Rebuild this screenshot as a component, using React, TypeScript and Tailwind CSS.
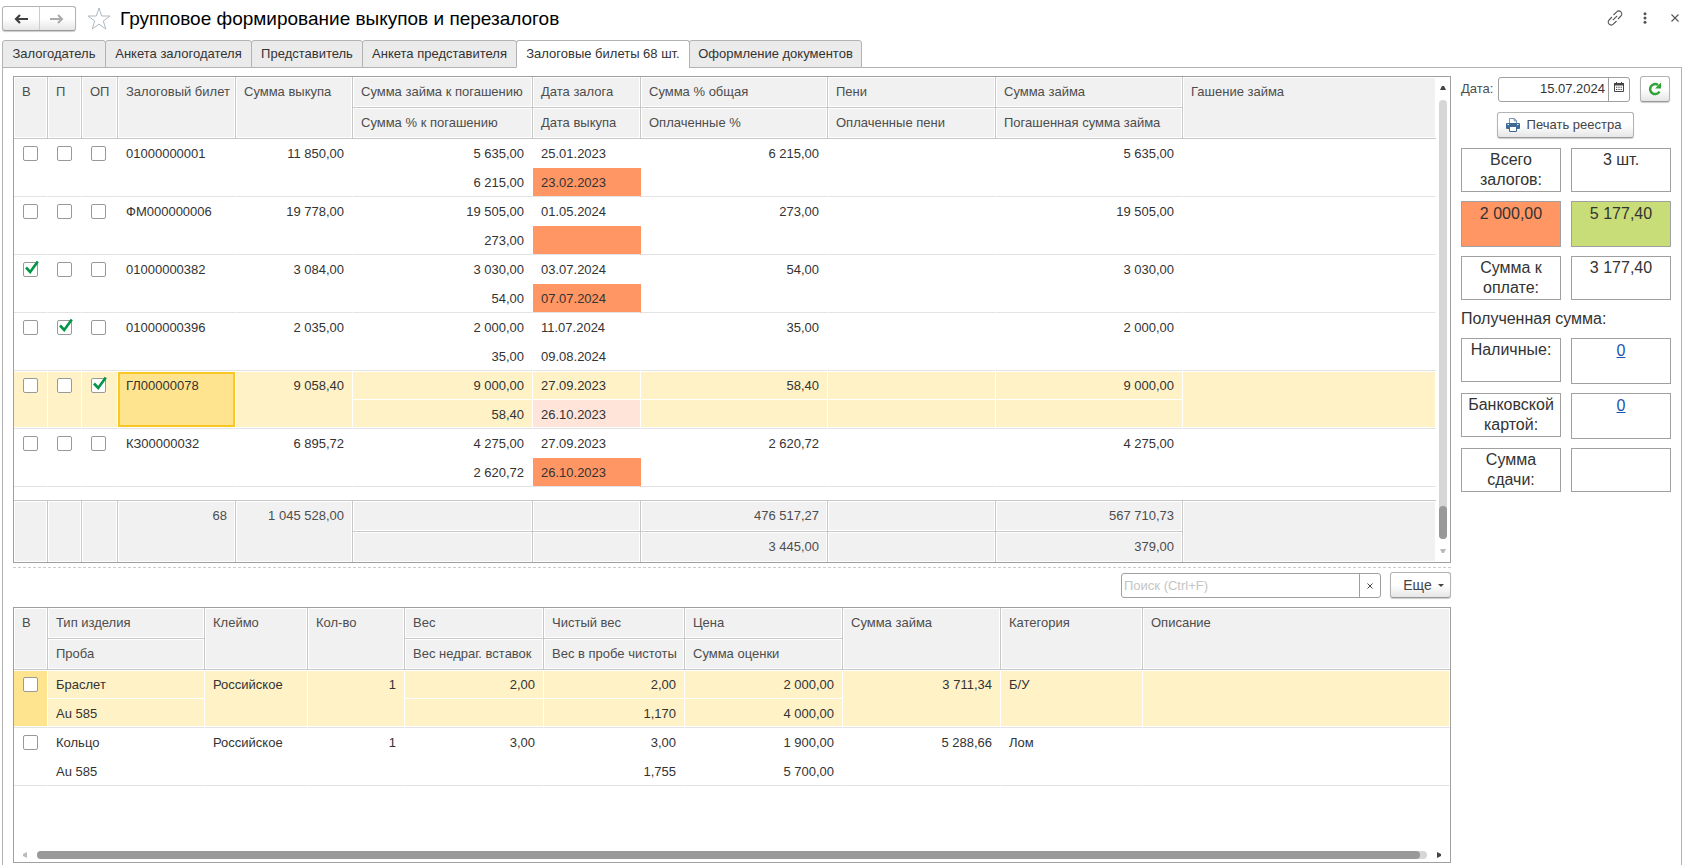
import { clsx } from "clsx";

type TColumn = {
  top: string;
  bottom?: string;
  width: string;
  align?: "right";
  check?: boolean;
};

type TCell = {
  top?: string;
  bottom?: string;
  checked?: boolean;
  mark?: "overdue" | "soft" | "current" | "focus";
};

type TRow = {
  id: string;
  selected?: boolean;
  cells: TCell[];
};

const tabs = [
  { title: "Залогодатель", width: "w-[104px]" },
  { title: "Анкета залогодателя", width: "w-[147px]" },
  { title: "Представитель", width: "w-[112px]" },
  { title: "Анкета представителя", width: "w-[155px]" },
  { title: "Залоговые билеты 68 шт.", width: "w-[174px]", active: true },
  { title: "Оформление документов", width: "w-[173px]" },
];

const ticketColumns: TColumn[] = [
  { top: "В", width: "w-[34px]", check: true },
  { top: "П", width: "w-[34px]", check: true },
  { top: "ОП", width: "w-[36px]", check: true },
  { top: "Залоговый билет", width: "w-[118px]" },
  { top: "Сумма выкупа", width: "w-[117px]", align: "right" },
  {
    top: "Сумма займа к погашению",
    bottom: "Сумма % к погашению",
    width: "w-[180px]",
    align: "right",
  },
  { top: "Дата залога", bottom: "Дата выкупа", width: "w-[108px]" },
  {
    top: "Сумма % общая",
    bottom: "Оплаченные %",
    width: "w-[187px]",
    align: "right",
  },
  {
    top: "Пени",
    bottom: "Оплаченные пени",
    width: "w-[168px]",
    align: "right",
  },
  {
    top: "Сумма займа",
    bottom: "Погашенная сумма займа",
    width: "w-[187px]",
    align: "right",
  },
  { top: "Гашение займа", width: "w-auto" },
];

const ticketRows: TRow[] = [
  {
    id: "01000000001",
    cells: [
      {},
      {},
      {},
      { top: "01000000001" },
      { top: "11 850,00" },
      { top: "5 635,00", bottom: "6 215,00" },
      { top: "25.01.2023", bottom: "23.02.2023", mark: "overdue" },
      { top: "6 215,00" },
      {},
      { top: "5 635,00" },
      {},
    ],
  },
  {
    id: "ФМ000000006",
    cells: [
      {},
      {},
      {},
      { top: "ФМ000000006" },
      { top: "19 778,00" },
      { top: "19 505,00", bottom: "273,00" },
      { top: "01.05.2024", mark: "overdue" },
      { top: "273,00" },
      {},
      { top: "19 505,00" },
      {},
    ],
  },
  {
    id: "01000000382",
    cells: [
      { checked: true },
      {},
      {},
      { top: "01000000382" },
      { top: "3 084,00" },
      { top: "3 030,00", bottom: "54,00" },
      { top: "03.07.2024", bottom: "07.07.2024", mark: "overdue" },
      { top: "54,00" },
      {},
      { top: "3 030,00" },
      {},
    ],
  },
  {
    id: "01000000396",
    cells: [
      {},
      { checked: true },
      {},
      { top: "01000000396" },
      { top: "2 035,00" },
      { top: "2 000,00", bottom: "35,00" },
      { top: "11.07.2024", bottom: "09.08.2024" },
      { top: "35,00" },
      {},
      { top: "2 000,00" },
      {},
    ],
  },
  {
    id: "ГЛ00000078",
    selected: true,
    cells: [
      {},
      {},
      { checked: true },
      { top: "ГЛ00000078", mark: "focus" },
      { top: "9 058,40" },
      { top: "9 000,00", bottom: "58,40" },
      { top: "27.09.2023", bottom: "26.10.2023", mark: "soft" },
      { top: "58,40" },
      {},
      { top: "9 000,00" },
      {},
    ],
  },
  {
    id: "КЗ00000032",
    cells: [
      {},
      {},
      {},
      { top: "КЗ00000032" },
      { top: "6 895,72" },
      { top: "4 275,00", bottom: "2 620,72" },
      { top: "27.09.2023", bottom: "26.10.2023", mark: "overdue" },
      { top: "2 620,72" },
      {},
      { top: "4 275,00" },
      {},
    ],
  },
];

const ticketTotals: TCell[] = [
  {},
  {},
  {},
  { top: "68" },
  { top: "1 045 528,00" },
  {},
  {},
  { top: "476 517,27", bottom: "3 445,00" },
  {},
  { top: "567 710,73", bottom: "379,00" },
  {},
];

const itemColumns: TColumn[] = [
  { top: "В", width: "w-[34px]", check: true },
  { top: "Тип изделия", bottom: "Проба", width: "w-[157px]" },
  { top: "Клеймо", width: "w-[103px]" },
  { top: "Кол-во", width: "w-[97px]", align: "right" },
  {
    top: "Вес",
    bottom: "Вес недраг. вставок",
    width: "w-[139px]",
    align: "right",
  },
  {
    top: "Чистый вес",
    bottom: "Вес в пробе чистоты",
    width: "w-[141px]",
    align: "right",
  },
  {
    top: "Цена",
    bottom: "Сумма оценки",
    width: "w-[158px]",
    align: "right",
  },
  { top: "Сумма займа", width: "w-[158px]", align: "right" },
  { top: "Категория", width: "w-[142px]" },
  { top: "Описание", width: "w-auto" },
];

const itemRows: TRow[] = [
  {
    id: "Браслет",
    selected: true,
    cells: [
      { mark: "current" },
      { top: "Браслет", bottom: "Au 585" },
      { top: "Российское" },
      { top: "1" },
      { top: "2,00" },
      { top: "2,00", bottom: "1,170" },
      { top: "2 000,00", bottom: "4 000,00" },
      { top: "3 711,34" },
      { top: "Б/У" },
      {},
    ],
  },
  {
    id: "Кольцо",
    cells: [
      {},
      { top: "Кольцо", bottom: "Au 585" },
      { top: "Российское" },
      { top: "1" },
      { top: "3,00" },
      { top: "3,00", bottom: "1,755" },
      { top: "1 900,00", bottom: "5 700,00" },
      { top: "5 288,66" },
      { top: "Лом" },
      {},
    ],
  },
];

const buttonStyle =
  "flex items-center justify-center rounded-[3px] border border-[#b3b3b3] border-b-[#999] bg-linear-to-b from-white from-50% to-[#e6e6e6] text-[#444] shadow-[0_1px_1px_#ccc]";

const Check = ({ label, checked }: { label: string; checked?: boolean }) => (
  <span className="relative mt-1.5 ml-px block size-[15px]">
    <input
      type="checkbox"
      aria-label={label}
      defaultChecked={checked}
      className="peer block size-[15px] appearance-none rounded-[2px] border border-[#999] bg-white"
    />
    <svg
      viewBox="0 0 16 16"
      className="pointer-events-none absolute -top-0.5 left-0 hidden size-4 peer-checked:block"
    >
      <path
        d="M3 7.5L7.2 12 14.8 1.5"
        fill="none"
        stroke="#009646"
        strokeWidth="2.6"
      />
    </svg>
  </span>
);

const headCell =
  "border-r border-b border-[#c8c8c8] bg-[#f1f1f1] px-2 text-left align-top font-normal whitespace-nowrap shadow-[inset_0_0_0_1px_#fff]";

const HeadRows = ({ columns }: { columns: TColumn[] }) => (
  <thead className="leading-[30px] text-[#4d4d4d]">
    <tr className="h-[31px]">
      {columns.map((column) => (
        <th
          key={column.top}
          rowSpan={column.bottom ? 1 : 2}
          className={clsx(headCell, "last:border-r-0")}
        >
          {column.top}
        </th>
      ))}
    </tr>
    <tr className="h-[31px]">
      {columns
        .filter((column) => column.bottom)
        .map((column) => (
          <th key={column.bottom} className={headCell}>
            {column.bottom}
          </th>
        ))}
    </tr>
  </thead>
);

const BodyRow = ({ row, columns }: { row: TRow; columns: TColumn[] }) => (
  <>
    <tr className="h-[29px]">
      {columns.map((column, index) => {
        const cell = row.cells[index];
        const tall = !column.bottom;
        return (
          <td
            key={column.top}
            rowSpan={tall ? 2 : 1}
            className={clsx(
              "border-r border-b px-2 pt-px align-top",
              column.align === "right" && "text-right",
              tall ? "border-b-[#e3e3e3]" : "border-b-white",
              row.selected ? "border-r-white" : "border-r-transparent",
              row.selected &&
                (!cell.mark || cell.mark === "soft") &&
                "bg-[#fff2c7]",
              cell.mark === "current" && "bg-[#ffe48f]",
              row.selected &&
                cell.mark !== "focus" &&
                (tall
                  ? "shadow-[inset_0_1px_0_#fff,inset_0_-1px_0_#fff]"
                  : "shadow-[inset_0_1px_0_#fff]"),
              cell.mark === "focus" &&
                "bg-[#ffe48f] shadow-[inset_0_1px_0_#fff,inset_0_-1px_0_#fff,inset_0_3px_0_#fac825,inset_0_-3px_0_#fac825,inset_2px_0_0_#fac825,inset_-2px_0_0_#fac825]"
            )}
          >
            {column.check ? (
              <Check
                label={`${column.top} ${row.id}`}
                checked={cell.checked}
              />
            ) : (
              cell.top
            )}
          </td>
        );
      })}
    </tr>
    <tr className="h-[29px]">
      {columns.map((column, index) => {
        const cell = row.cells[index];
        if (!column.bottom) return null;
        return (
          <td
            key={column.bottom}
            className={clsx(
              "border-r border-b border-b-[#e3e3e3] px-2 pt-px align-top",
              column.align === "right" && "text-right",
              row.selected
                ? "border-r-white shadow-[inset_0_-1px_0_#fff]"
                : "border-r-transparent",
              cell.mark === "overdue" && "bg-[#ff9664]",
              cell.mark === "soft" && "bg-[#ffe4da]",
              row.selected && cell.mark !== "soft" && "bg-[#fff2c7]"
            )}
          >
            {cell.bottom}
          </td>
        );
      })}
    </tr>
  </>
);

const TotalRows = ({
  totals,
  columns,
}: {
  totals: TCell[];
  columns: TColumn[];
}) => (
  <tfoot className="leading-[30px] text-[#4d4d4d]">
    <tr className="h-[14px]">
      <td
        colSpan={columns.length}
        className="border-b border-[#c8c8c8] leading-3"
      />
    </tr>
    <tr className="h-[31px]">
      {columns.map((column, index) => (
        <td
          key={column.top}
          rowSpan={column.bottom ? 1 : 2}
          className={clsx(
            "border-r border-[#c8c8c8] bg-[#f1f1f1] px-2 text-right align-top shadow-[inset_0_0_0_1px_#fff] last:border-r-0",
            column.bottom && "border-b"
          )}
        >
          {totals[index].top}
        </td>
      ))}
    </tr>
    <tr className="h-[30px]">
      {columns.map(
        (column, index) =>
          column.bottom && (
            <td
              key={column.bottom}
              className="border-r border-[#c8c8c8] bg-[#f1f1f1] px-2 text-right align-top shadow-[inset_0_0_0_1px_#fff]"
            >
              {totals[index].bottom}
            </td>
          )
      )}
    </tr>
  </tfoot>
);

const DataTable = ({
  columns,
  rows,
  totals,
}: {
  columns: TColumn[];
  rows: TRow[];
  totals?: TCell[];
}) => (
  <table className="w-full table-fixed border-separate border-spacing-0 leading-[27px]">
    <colgroup>
      {columns.map((column) => (
        <col key={column.top} className={column.width} />
      ))}
    </colgroup>
    <HeadRows columns={columns} />
    <tbody>
      {rows.map((row) => (
        <BodyRow key={row.id} row={row} columns={columns} />
      ))}
    </tbody>
    {totals && <TotalRows totals={totals} columns={columns} />}
  </table>
);

const VerticalScroll = () => (
  <div className="flex w-3.5 shrink-0 flex-col items-center py-[9px]">
    <svg viewBox="0 0 6 4" className="h-1 w-1.5">
      <path d="M0 4L2 0h2l2 4z" fill="#444" />
    </svg>
    <div className="mt-2.5 flex w-2 flex-1 flex-col justify-end rounded-full bg-[#d6d6d6]">
      <div className="h-[33px] rounded-full bg-[#999]" />
    </div>
    <svg viewBox="0 0 6 4" className="mt-2.5 h-1 w-1.5">
      <path d="M0 0L2 4h2l2-4z" fill="#bbb" />
    </svg>
  </div>
);

const HorizontalScroll = () => (
  <div className="mt-auto flex items-center px-[9px] pb-[3px]">
    <svg viewBox="0 0 4 6" className="h-1.5 w-1">
      <path d="M4 0L0 2v2l4 2z" fill="#bbb" />
    </svg>
    <div className="mx-2.5 h-2 flex-1 rounded-full bg-[#d6d6d6] pr-[7px]">
      <div className="h-2 rounded-full bg-[#999]" />
    </div>
    <svg viewBox="0 0 4 6" className="h-1.5 w-1">
      <path d="M0 0l4 2v2L0 6z" fill="#444" />
    </svg>
  </div>
);

const TitleBar = () => (
  <header className="flex h-10 items-start pt-1.5 pr-[21px] pl-0.5">
    <div className="flex h-[25px] w-[74px] rounded-[3px] border border-[#b3b3b3] border-b-[#999] bg-linear-to-b from-white from-50% to-[#e6e6e6] shadow-[0_1px_1px_#ccc]">
      <button
        aria-label="Назад"
        className="flex flex-1 items-center justify-center border-r border-[#ccc]"
      >
        <svg viewBox="0 0 14 10" className="h-2.5 w-3.5">
          <path
            d="M14 5H3M6 1L2 5l4 4"
            fill="none"
            stroke="#404040"
            strokeWidth="2.2"
          />
        </svg>
      </button>
      <button
        aria-label="Вперед"
        className="flex flex-1 items-center justify-center"
      >
        <svg viewBox="0 0 14 10" className="h-2.5 w-3.5">
          <path
            d="M0 5h11M8 1l4 4-4 4"
            fill="none"
            stroke="#aaa"
            strokeWidth="2"
          />
        </svg>
      </button>
    </div>
    <button aria-label="Избранное" className="mt-px ml-[11px]">
      <svg viewBox="0 0 24 24" className="size-6">
        <path
          d="M12 1l2.7 8h8.300l-6.700 5 2.500 8L12 17.200 5.200 22l2.500-8L1 9h8.300z"
          fill="none"
          stroke="#b0b8c0"
        />
      </svg>
    </button>
    <h1 className="ml-[9px] text-[19px] leading-[26px] text-black">
      Групповое формирование выкупов и перезалогов
    </h1>
    <div className="ml-auto flex items-center gap-5 pt-1 text-[#555]">
      <button aria-label="Ссылка">
        <svg
          viewBox="0 0 16 16"
          className="size-4"
          fill="none"
          stroke="currentColor"
          strokeWidth="1.1"
        >
          <path d="M6.5 5l3.200-3.200a2.900 2.900 0 0 1 4.200 0 2.900 2.900 0 0 1 0 4.200L11 9" />
          <path d="M9.500 11l-3.200 3.200a2.900 2.900 0 0 1-4.200 0 2.900 2.900 0 0 1 0-4.200L5 7" />
          <path d="M5.800 10.200l4.400-4.400" />
        </svg>
      </button>
      <button aria-label="Меню">
        <svg viewBox="0 0 4 12" className="h-3 w-1" fill="currentColor">
          <circle cx="2" cy="1.7" r="1.5" />
          <circle cx="2" cy="6" r="1.5" />
          <circle cx="2" cy="10.3" r="1.5" />
        </svg>
      </button>
      <button aria-label="Закрыть" className="pl-1">
        <svg viewBox="0 0 8 8" className="size-2">
          <path
            d="M.5.5l7 7M7.5.5l-7 7"
            stroke="currentColor"
            strokeWidth="1.1"
          />
        </svg>
      </button>
    </div>
  </header>
);

const TabBar = () => (
  <nav className="relative z-10 -mb-px flex h-7 pl-0.5">
    {tabs.map((tab, index) => (
      <button
        key={tab.title}
        className={clsx(
          "rounded-t-[3px] border border-[#b3b3b3] text-center whitespace-nowrap text-[#333]",
          tab.width,
          index > 0 && "-ml-px",
          tab.active ? "border-b-white bg-white" : "bg-[#ebebeb]"
        )}
      >
        {tab.title}
      </button>
    ))}
  </nav>
);

const SearchBar = () => (
  <div className="mt-1 mb-2 flex h-[27px] items-start justify-end gap-[9px]">
    <div className="mt-px flex h-[25px] w-[260px] rounded-[3px] border border-[#a0a0a0]">
      <input
        type="text"
        aria-label="Поиск"
        placeholder="Поиск (Ctrl+F)"
        className="min-w-0 flex-1 px-0.5 placeholder:text-[#c4c4c4] focus:outline-none"
      />
      <button
        aria-label="Очистить"
        className="flex w-[21px] items-center justify-center border-l border-[#a0a0a0]"
      >
        <svg viewBox="0 0 6 6" className="size-1.5">
          <path d="M.5.5l5 5M5.5.5l-5 5" stroke="#444" />
        </svg>
      </button>
    </div>
    <button
      className={clsx(buttonStyle, "h-[26px] w-[61px] gap-1.5 pl-1.5 text-sm")}
    >
      Еще
      <svg viewBox="0 0 6 3" className="h-[3px] w-1.5">
        <path d="M0 0h6L3 3z" fill="#444" />
      </svg>
    </button>
  </div>
);

const boxStyle = "h-11 border border-[#a0a0a0] px-1 pt-px";
const tallBoxStyle = "h-[46px] border border-[#a0a0a0] px-1 pt-0.5";

const Summary = () => (
  <aside className="flex w-[210px] shrink-0 flex-col">
    <div className="flex h-[26px] items-center">
      <label htmlFor="date" className="w-[37px] text-[#4d4d4d]">
        Дата:
      </label>
      <div className="flex h-[25px] w-[132px] rounded-[3px] border border-[#a0a0a0]">
        <input
          id="date"
          type="text"
          defaultValue="15.07.2024"
          className="min-w-0 flex-1 pr-[3px] text-right text-[#333] focus:outline-none"
        />
        <button
          aria-label="Выбрать дату"
          className="flex w-[21px] items-center justify-center border-l border-[#a0a0a0]"
        >
          <svg viewBox="0 0 10 10" className="mb-1 size-2.5">
            <path
              d="M.5 1.5h9v8h-9zM2.5 0v2M7.5 0v2"
              fill="none"
              stroke="#444"
            />
            <path d="M0 1h10v2.500H0z" fill="#444" />
            <path
              d="M2 5.200h6M2 7.500h6"
              stroke="#444"
              strokeWidth="1.1"
              strokeDasharray="1.3 1"
            />
          </svg>
        </button>
      </div>
      <button
        aria-label="Обновить"
        className={clsx(buttonStyle, "ml-2.5 h-[26px] w-[30px]")}
      >
        <svg viewBox="0 0 14 14" className="size-3.5">
          <path
            d="M11.500 9.500A5 5 0 1 1 10 3"
            fill="none"
            stroke="#2ea336"
            strokeWidth="2.5"
          />
          <path d="M13 .5v6H7z" fill="#2ea336" />
        </svg>
      </button>
    </div>
    <button
      className={clsx(buttonStyle, "mt-2.5 ml-9 h-[26px] w-[137px] gap-[7px] pr-1")}
    >
      <svg viewBox="0 0 14 14" className="size-3.5">
        <path
          d="M3.500 6V.5h5l2 2V6"
          fill="#fff"
          stroke="#6b8cae"
          strokeWidth=".9"
        />
        <path d="M8.200.5v2.300h2.300" fill="none" stroke="#6b8cae" />
        <rect y="5" width="14" height="6" rx="1" fill="#3d6a96" />
        <path d="M1.500 6.500h1.500M11 6.500h1.500" stroke="#fff" />
        <path d="M3.500 8.500h7v5h-7z" fill="#fff" stroke="#3d6a96" />
      </svg>
      Печать реестра
    </button>
    <div className="mt-2.5 grid grid-cols-2 items-start gap-x-2.5 gap-y-[9px] text-center text-base leading-5 text-[#333]">
      <div className={boxStyle}>Всего залогов:</div>
      <div className={boxStyle}>3 шт.</div>
      <div className={clsx(tallBoxStyle, "bg-[#ff9664]")}>2 000,00</div>
      <div className={clsx(tallBoxStyle, "bg-[#c8dc78]")}>5 177,40</div>
      <div className={boxStyle}>Сумма к оплате:</div>
      <div className={boxStyle}>3 177,40</div>
      <div className="col-span-2 text-left">Полученная сумма:</div>
      <div className={boxStyle}>Наличные:</div>
      <div className={tallBoxStyle}>
        <a href="#cash" className="text-[#1a54b0] underline">
          0
        </a>
      </div>
      <div className={boxStyle}>Банковской картой:</div>
      <div className={tallBoxStyle}>
        <a href="#card" className="text-[#1a54b0] underline">
          0
        </a>
      </div>
      <div className={boxStyle}>Сумма сдачи:</div>
      <div className={boxStyle} />
    </div>
  </aside>
);

const App = () => {
  return (
    <div className="flex min-h-screen flex-col bg-white font-['Liberation_Sans',Arial,sans-serif] text-[13px] text-[#333]">
      <TitleBar />
      <TabBar />
      <main className="mr-[18px] ml-0.5 flex flex-1 gap-2.5 border border-b-0 border-[#b3b3b3] px-2.5 pt-2 pb-0.5">
        <section className="flex min-w-0 flex-1 flex-col">
          <div className="flex border border-[#a0a0a0]">
            <div className="min-w-0 flex-1">
              <DataTable
                columns={ticketColumns}
                rows={ticketRows}
                totals={ticketTotals}
              />
            </div>
            <VerticalScroll />
          </div>
          <div className="mt-1 border-t border-dashed border-[#ccc]" />
          <SearchBar />
          <div className="flex flex-1 flex-col border border-[#a0a0a0]">
            <DataTable columns={itemColumns} rows={itemRows} />
            <HorizontalScroll />
          </div>
        </section>
        <Summary />
      </main>
    </div>
  );
};

export default App;
